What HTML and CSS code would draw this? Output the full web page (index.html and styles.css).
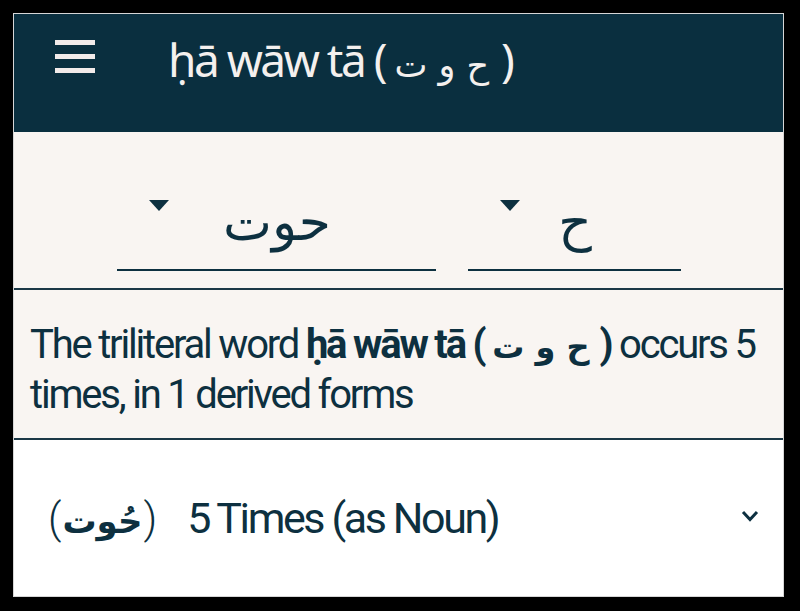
FILE: index.html
```html
<!DOCTYPE html>
<html lang="en">

<head>
    <meta charset="UTF-8">
    <meta name="viewport" content="width=device-width, initial-scale=1.0">
    <title>ḥā wāw tā</title>
    <link rel="stylesheet" href="styles.css">
</head>

<body>
    <div class="frame">
        <header class="appbar">
            <svg class="menu-icon" width="40" height="34" viewBox="0 0 40 34">
                <rect x="0" y="0" width="40" height="5" fill="#f2ebea" />
                <rect x="0" y="14" width="40" height="5" fill="#f2ebea" />
                <rect x="0" y="28" width="40" height="5" fill="#f2ebea" />
            </svg>
            <h1 class="title">ḥā wāw tā ( <span class="ar">ح و ت</span> )</h1>
        </header>

        <div class="pickers">
            <div class="picker picker-wide">
                <span class="caret"></span>
                <span class="picker-value ar">حوت</span>
            </div>
            <div class="picker picker-narrow">
                <span class="caret"></span>
                <span class="picker-value ar">ح</span>
            </div>
        </div>

        <p class="summary">The triliteral word <b>ḥā wāw tā ( <span class="ar">ح و ت</span> )</b> occurs 5 times, in 1 derived forms</p>

        <div class="form-row">
            <span class="form-word">(<b class="ar">حُوت</b>)</span>
            <span class="form-count">5 Times (as Noun)</span>
            <svg class="chevron" width="18" height="12" viewBox="0 0 18 12">
                <polyline points="2,2 9,9.5 16,2" fill="none" stroke="#0d3040" stroke-width="3" />
            </svg>
        </div>
    </div>
</body>

</html>
```

FILE: styles.css
```css
body {
    margin: 0;
    background-color: #000;
    font-family: Roboto, "Noto Sans", sans-serif;
    color: #0d3040;
}

.frame {
    margin: 13px 0 0 13px;
    width: 769px;
    height: 582px;
    border: 1px solid #d6d6d6;
    background-color: #fff;
    display: flex;
    flex-direction: column;
}

.ar {
    font-family: "DejaVu Sans", serif;
}

.appbar {
    height: 118px;
    flex-shrink: 0;
    box-sizing: border-box;
    padding: 26px 0 0 41px;
    background-color: #0a2f3f;
    display: flex;
    align-items: flex-start;
}

.title {
    margin: -12px 0 0 73px;
    font-family: "Noto Sans", sans-serif;
    font-weight: normal;
    font-size: 46px;
    letter-spacing: -2.5px;
    color: #f4f0ee;
}

.title .ar {
    font-size: 35px;
    letter-spacing: 0;
}

.pickers {
    height: 158px;
    flex-shrink: 0;
    box-sizing: border-box;
    background-color: #f9f5f2;
    border-bottom: 2px solid #1b3846;
    display: flex;
    justify-content: center;
    align-items: flex-end;
    gap: 32px;
    padding-bottom: 17px;
}

.picker {
    height: 90px;
    border-bottom: 2px solid #0d3040;
    display: flex;
    align-items: center;
    box-sizing: border-box;
    padding: 0 50px 0 32px;
}

.picker-wide {
    width: 319px;
}

.picker-narrow {
    width: 213px;
}

.caret {
    width: 0;
    height: 0;
    border-left: 10px solid transparent;
    border-right: 10px solid transparent;
    border-top: 11px solid #0d3040;
    margin-top: -40px;
}

.picker-value {
    flex: 1;
    text-align: center;
    font-size: 52px;
    margin-top: -6px;
}

.summary {
    margin: 0;
    height: 150px;
    flex-shrink: 0;
    box-sizing: border-box;
    padding: 31px 16px 0;
    background-color: #f9f5f2;
    border-bottom: 2px solid #1b3846;
    font-size: 40px;
    line-height: 48px;
    letter-spacing: -2.2px;
}

.summary .ar {
    font-size: 32px;
    letter-spacing: 0;
}

.form-row {
    flex: 1;
    display: flex;
    align-items: center;
    padding: 0 24px 0 34px;
}

.form-word {
    font-size: 42px;
    font-weight: 300;
}

.form-word b {
    font-size: 34px;
    font-weight: bold;
    padding: 0 1px;
}

.form-count {
    flex: 1;
    margin-left: 30px;
    font-size: 43px;
    letter-spacing: -2.4px;
}

.chevron {
    margin-top: -4px;
}
```
